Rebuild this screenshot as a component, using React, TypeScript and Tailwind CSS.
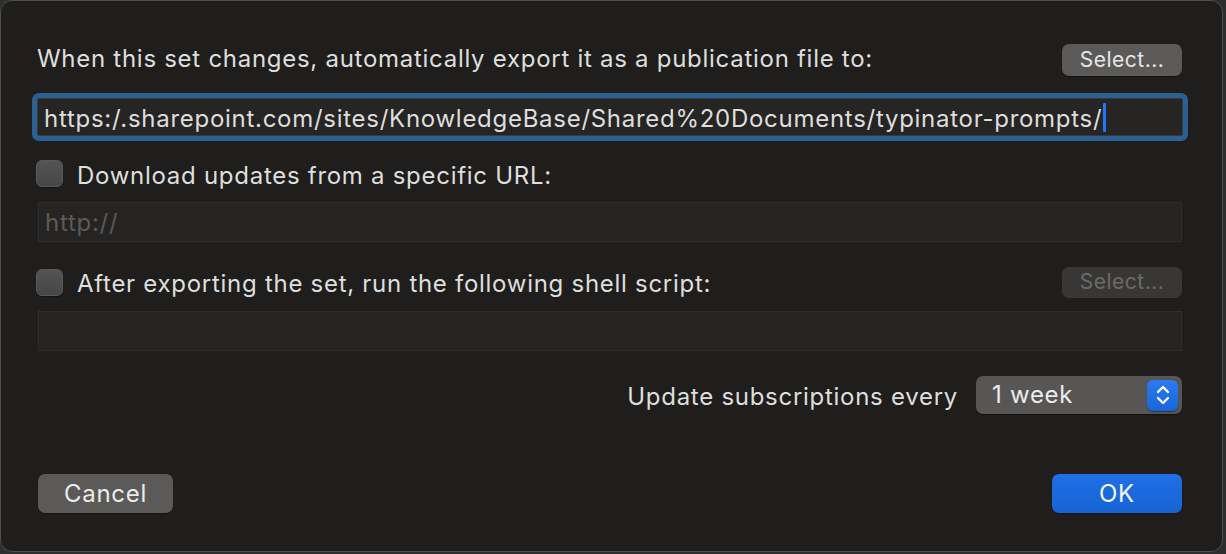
import React from "react";

const font = { fontFamily: "Inter, 'Noto Sans', 'Liberation Sans', sans-serif" };

function Checkbox() {
  return (
    <div className="h-[27px] w-[27px] shrink-0 rounded-[6px] border border-[#5a5a5a] bg-gradient-to-b from-[#545454] to-[#464646] shadow-[0_1px_1px_rgba(0,0,0,0.4)]" />
  );
}

function Stepper() {
  return (
    <div className="flex h-[31px] w-[31px] items-center justify-center rounded-[6px] bg-gradient-to-b from-[#2a7cf0] to-[#1766da] shadow-[0_1px_1px_rgba(0,0,0,0.4)]">
      <svg width="16" height="24" viewBox="0 0 16 24" fill="none" stroke="#ffffff" strokeWidth="2.4" strokeLinecap="round" strokeLinejoin="round">
        <path d="M3 9 L8 4 L13 9" />
        <path d="M3 15 L8 20 L13 15" />
      </svg>
    </div>
  );
}

export default function App() {
  return (
    <div className="h-[554px] w-[1226px] overflow-hidden bg-[#2e2e2e]" style={font}>
      <div className="flex h-[552px] w-[1223px] flex-col rounded-[12px] border border-[#4e4e4e] bg-[#1f1e1d] pl-[37px] pr-[40px] text-[24px] leading-[30px] tracking-[0.72px] text-[#dedede]">
        {/* Row 1 */}
        <div className="mt-[43px] flex h-[32px] items-center justify-between">
          <span className="-ml-px pb-[2px]">When this set changes, automatically export it as a publication file to:</span>
          <button className="h-[32px] w-[120px] rounded-[7px] bg-[#5b5a59] text-[21px] tracking-[0.5px] text-[#e6e6e6] shadow-[0_1px_1px_rgba(0,0,0,0.35)]">
            Select...
          </button>
        </div>

        {/* Focused field */}
        <div className="mt-[17px] -mx-[6px] rounded-[7px] bg-[#2b6192] p-[5px]">
          <div className="flex h-[38px] items-center rounded-[2px] border border-[#3a3a3a] bg-[#262524] pl-[6px] pt-[3px]">
            <span>https:/.sharepoint.com/sites/KnowledgeBase/Shared%20Documents/typinator-prompts/</span>
            <span className="-mt-[2px] ml-[1px] h-[29px] w-[3px] rounded-[1px] bg-[#1e78ff]" />
          </div>
        </div>

        {/* Checkbox 1 */}
        <div className="mt-[19px] flex h-[27px] items-center gap-[14px]">
          <div className="-ml-[2px]">
            <Checkbox />
          </div>
          <span className="pt-[4px]">Download updates from a specific URL:</span>
        </div>

        {/* Field 2 */}
        <div className="mt-[15px] flex h-[40px] items-center border border-[#2f2e2d] bg-[#252423] pl-[6px] pt-[2px] text-[#5b5a59]">
          http://
        </div>

        {/* Checkbox 2 row */}
        <div className="mt-[24px] flex h-[32px] items-center justify-between">
          <div className="flex items-center gap-[14px]">
            <div className="-ml-[2px]">
              <Checkbox />
            </div>
            <span className="pt-[4px]">After exporting the set, run the following shell script:</span>
          </div>
          <button className="h-[31px] w-[120px] rounded-[7px] bg-[#383736] text-[21px] tracking-[0.5px] text-[#6b6a69]">
            Select...
          </button>
        </div>

        {/* Field 3 */}
        <div className="mt-[13px] h-[40px] border border-[#2f2e2d] bg-[#252423]" />

        {/* Popup row */}
        <div className="mt-[25px] flex h-[38px] items-center justify-end">
          <span className="mr-[18px] pt-[4px]">Update subscriptions every</span>
          <div className="flex h-[38px] w-[206px] items-center justify-between rounded-[7px] bg-[#575655] pl-[16px] pr-[4px] shadow-[0_1px_1px_rgba(0,0,0,0.4)]">
            <span className="text-[#ececec]">1 week</span>
            <Stepper />
          </div>
        </div>

        {/* Bottom buttons */}
        <div className="mt-[60px] flex h-[39px] items-center justify-between">
          <button className="h-[39px] w-[135px] rounded-[7px] bg-[#5b5a59] text-[#ebebeb] shadow-[0_1px_1px_rgba(0,0,0,0.35)]">
            Cancel
          </button>
          <button className="h-[39px] w-[130px] rounded-[7px] bg-gradient-to-b from-[#1f70e4] to-[#1763d4] text-[#f4f7fc] shadow-[0_1px_1px_rgba(0,0,0,0.35)]">
            OK
          </button>
        </div>
      </div>
    </div>
  );
}
